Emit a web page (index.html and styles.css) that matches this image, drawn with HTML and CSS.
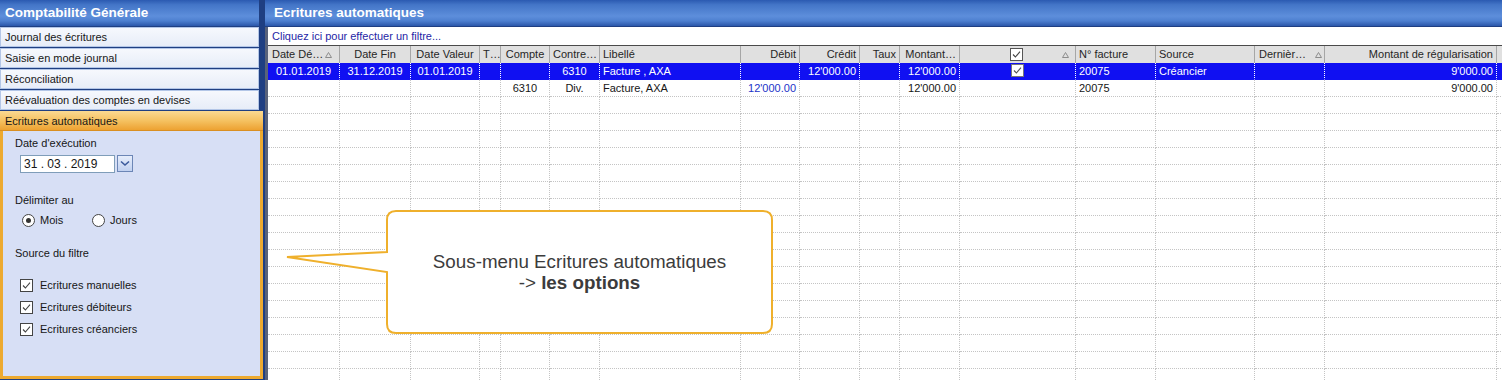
FILE: index.html
```html
<!DOCTYPE html>
<html lang="fr">
<head>
  <meta charset="UTF-8" />
  <meta name="viewport" content="width=device-width, initial-scale=1.0"/>
  <title>Comptabilité Générale - Ecritures automatiques</title>
  <link rel="stylesheet" href="styles.css">
</head>
<body>
  <div class="app">
    <aside class="sidebar">
      <div class="title-bar side-title">Comptabilité Générale</div>
      <ul class="menu">
        <li>Journal des écritures</li>
        <li>Saisie en mode journal</li>
        <li>Réconciliation</li>
        <li>Réévaluation des comptes en devises</li>
      </ul>

      <section class="options">
        <div class="options-head">Ecritures automatiques</div>
        <div class="options-body">
          <div class="field-label">Date d'exécution</div>
          <div class="date-row">
            <div class="date-input">31 . 03 . 2019</div>
            <div class="date-btn">
              <svg width="10" height="7" viewBox="0 0 10 7"><path d="M1 1.5 L5 5 L9 1.5" fill="none" stroke="#3b5a9c" stroke-width="1.6"/></svg>
            </div>
          </div>

          <div class="field-label gap-delim">Délimiter au</div>
          <div class="radio-row">
            <label class="radio-opt"><span class="radio on"></span>Mois</label>
            <label class="radio-opt"><span class="radio"></span>Jours</label>
          </div>

          <div class="field-label gap-source">Source du filtre</div>
          <ul class="check-list">
            <li><svg class="check" width="13" height="13" viewBox="0 0 13 13"><rect x="0.5" y="0.5" width="12" height="12" fill="#fff" stroke="#444"/><path d="M3 6.5 L5.4 9 L10 3.6" fill="none" stroke="#444" stroke-width="1.1"/></svg>Ecritures manuelles</li>
            <li><svg class="check" width="13" height="13" viewBox="0 0 13 13"><rect x="0.5" y="0.5" width="12" height="12" fill="#fff" stroke="#444"/><path d="M3 6.5 L5.4 9 L10 3.6" fill="none" stroke="#444" stroke-width="1.1"/></svg>Ecritures débiteurs</li>
            <li><svg class="check" width="13" height="13" viewBox="0 0 13 13"><rect x="0.5" y="0.5" width="12" height="12" fill="#fff" stroke="#444"/><path d="M3 6.5 L5.4 9 L10 3.6" fill="none" stroke="#444" stroke-width="1.1"/></svg>Ecritures créanciers</li>
          </ul>
        </div>
      </section>
    </aside>

    <main class="main">
      <div class="title-bar main-title">Ecritures automatiques</div>
      <div class="grid-panel">
        <div class="filter">Cliquez ici pour effectuer un filtre...</div>

        <div class="row head">
          <div class="sort">Date Dé…<svg width="7" height="6" viewBox="0 0 7 6"><path d="M3.5 0.5 L6.5 5.5 L0.5 5.5 Z" fill="none" stroke="#8c8c8c"/></svg></div>
          <div class="c">Date Fin</div>
          <div class="c">Date Valeur</div>
          <div>T…</div>
          <div class="c">Compte</div>
          <div>Contre…</div>
          <div>Libellé</div>
          <div class="r">Débit</div>
          <div class="r">Crédit</div>
          <div class="r">Taux</div>
          <div class="r">Montant…</div>
          <div class="check-head">
            <svg width="13" height="13" viewBox="0 0 13 13"><rect x="0.5" y="0.5" width="12" height="12" fill="#fff" stroke="#555"/><path d="M3 6.5 L5.4 9 L10 3.6" fill="none" stroke="#444" stroke-width="1.1"/></svg>
            <svg class="tri" width="7" height="6" viewBox="0 0 7 6"><path d="M3.5 0.5 L6.5 5.5 L0.5 5.5 Z" fill="none" stroke="#8c8c8c"/></svg>
          </div>
          <div>N° facture</div>
          <div>Source</div>
          <div class="sort wide">Dernièr…<svg width="7" height="6" viewBox="0 0 7 6"><path d="M3.5 0.5 L6.5 5.5 L0.5 5.5 Z" fill="none" stroke="#8c8c8c"/></svg></div>
          <div class="r">Montant de régularisation</div>
          <div class="last"></div>
        </div>

        <div id="grid-body">
          <div class="row sel">
            <div class="c">01.01.2019</div>
            <div class="c">31.12.2019</div>
            <div class="c">01.01.2019</div>
            <div></div>
            <div></div>
            <div class="c">6310</div>
            <div>Facture , AXA</div>
            <div></div>
            <div class="r">12'000.00</div>
            <div></div>
            <div class="r">12'000.00</div>
            <div class="c"><svg class="cell-check" width="13" height="13" viewBox="0 0 13 13"><rect x="0.5" y="0.5" width="12" height="12" fill="#fff" stroke="#777"/><path d="M3 6.5 L5.4 9 L10 3.6" fill="none" stroke="#555" stroke-width="1.1"/></svg></div>
            <div>20075</div>
            <div>Créancier</div>
            <div></div>
            <div class="r">9'000.00</div>
            <div class="last"></div>
          </div>
          <div class="row">
            <div></div>
            <div></div>
            <div></div>
            <div></div>
            <div class="c">6310</div>
            <div class="c">Div.</div>
            <div>Facture, AXA</div>
            <div class="r debit">12'000.00</div>
            <div></div>
            <div></div>
            <div class="r">12'000.00</div>
            <div></div>
            <div>20075</div>
            <div></div>
            <div></div>
            <div class="r">9'000.00</div>
            <div class="last"></div>
          </div>
          <div class="row empty">
            <div></div><div></div><div></div><div></div><div></div><div></div>
            <div></div><div></div><div></div><div></div><div></div><div></div>
            <div></div><div></div><div></div><div></div><div class="last"></div>
          </div>
        </div>
      </div>
    </main>

    <!-- Callout over the grid -->
    <div class="callout">
      <svg class="callout-shape" width="490" height="128" viewBox="0 0 490 128">
        <path d="M111 3 H478 Q487 3 487 12 V116 Q487 125 478 125 H111 Q102 125 102 116 V64 L2 49 L102 44 V12 Q102 3 111 3 Z" fill="#fff" stroke="#efb02c" stroke-width="2"/>
      </svg>
      <div class="callout-text">
        Sous-menu Ecritures automatiques<br>
        -&gt; <strong>les options</strong>
      </div>
    </div>
  </div>

  <script>
    // fill the rest of the grid with empty rows
    const gridBody = document.getElementById('grid-body');
    const emptyRow = gridBody.querySelector('.row.empty');
    for (let i = 0; i < 16; i++) {
      gridBody.appendChild(emptyRow.cloneNode(true));
    }
  </script>
</body>
</html>
```

FILE: styles.css
```css
body {
  margin: 0;
  background: #1f3f82;
  font-family: "Liberation Sans", Arial, sans-serif;
  font-size: 11px;
  color: #161616;
}

.app {
  position: relative;
  display: flex;
  height: 380px;
  overflow: hidden;
}

/* ---- title bars ---- */
.title-bar {
  height: 26px;
  line-height: 26px;
  color: #fff;
  font-size: 13.5px;
  font-weight: bold;
  white-space: nowrap;
  background: linear-gradient(to bottom, #2b5ab1 0%, #4375c7 18%, #5d8edb 62%, #4e80d0 80%, #2b57aa 100%);
}

.side-title {
  width: 259px;
  padding-left: 5px;
  box-sizing: border-box;
}

.main-title {
  padding-left: 9px;
}

/* ---- sidebar ---- */
.sidebar {
  width: 262px;
  flex-shrink: 0;
  display: flex;
  flex-direction: column;
}

.menu {
  list-style: none;
  margin: 1px 0 0;
  padding: 0;
}

.menu li {
  box-sizing: border-box;
  width: 259px;
  height: 20px;
  line-height: 18px;
  margin-bottom: 1px;
  padding-left: 4px;
  border: 1px solid #b3c6e7;
  background: linear-gradient(to bottom, #f6f8fd, #e7edf8);
}

.options {
  flex: 1;
  width: 263px;
  box-sizing: border-box;
  margin-bottom: 1px;
  border: 3px solid #edaa30;
  border-top: 0;
  background: #d7dff5;
}

.options-head {
  height: 20px;
  line-height: 20px;
  margin: 0 -3px;
  padding-left: 5px;
  background: linear-gradient(to bottom, #fad992 0%, #f5c262 50%, #eda232 100%);
  border-bottom: 1px solid #d98f22;
  box-sizing: border-box;
}

.options-body {
  padding: 5px 0 0 12px;
}

.field-label {
  line-height: 14px;
}

.gap-delim {
  margin-top: 20px;
}

.gap-source {
  margin-top: 19px;
}

.date-row {
  display: flex;
  gap: 2px;
  margin: 5px 0 0 5px;
}

.date-input {
  width: 95px;
  height: 18px;
  box-sizing: border-box;
  padding-left: 3px;
  line-height: 16px;
  font-size: 12px;
  border: 1px solid #7f9db9;
  background: #fff;
}

.date-btn {
  width: 16px;
  height: 17px;
  box-sizing: border-box;
  display: flex;
  align-items: center;
  justify-content: center;
  border: 1px solid #6c86b6;
  background: linear-gradient(to bottom, #e6edfb, #c1d1f0);
}

.radio-row {
  display: flex;
  align-items: center;
  height: 14px;
  margin-top: 6px;
  padding-left: 7px;
}

.radio-opt {
  display: flex;
  align-items: center;
  gap: 5px;
  width: 70px;
}

.radio {
  position: relative;
  width: 13px;
  height: 13px;
  box-sizing: border-box;
  border: 1px solid #444;
  border-radius: 50%;
  background: #fff;
}

.radio.on::after {
  content: "";
  position: absolute;
  left: 3px;
  top: 3px;
  width: 5px;
  height: 5px;
  border-radius: 50%;
  background: #333;
}

.check-list {
  list-style: none;
  margin: 14px 0 0;
  padding: 0 0 0 5px;
}

.check-list li {
  display: flex;
  align-items: center;
  gap: 7px;
  height: 22px;
}

/* ---- main grid ---- */
.main {
  flex: 1;
  min-width: 0;
  margin-left: 3px;
  display: flex;
  flex-direction: column;
}

.grid-panel {
  flex: 1;
  margin-top: 1px;
  border-left: 3px solid #58627a;
  background: #fff;
  overflow: hidden;
}

.filter {
  height: 18px;
  line-height: 18px;
  padding-left: 4px;
  color: #1f1fa6;
  border-bottom: 1px solid #4a4a4a;
}

.row {
  display: grid;
  grid-template-columns: 72px 71px 69px 21px 49px 50px 141px 59px 60px 40px 60px 116px 80px 99px 70px 172px 1fr;
  height: 17px;
}

.row > div {
  box-sizing: border-box;
  padding: 0 3px;
  line-height: 16px;
  white-space: nowrap;
  overflow: hidden;
  border-right: 1px dotted #c4c4c4;
  border-bottom: 1px dotted #c4c4c4;
}

.row > .last {
  border-right: 0;
}

.row.head > div {
  line-height: 17px;
  color: #262626;
  background: #e0e0e0;
  border-bottom: 0;
  border-right: 1px solid #a6a6a6;
}

.row.head > .last {
  border-right: 0;
}

.row.head .sort {
  display: flex;
  align-items: center;
  gap: 2px;
  padding-left: 4px;
}

.row.head .sort.wide {
  gap: 9px;
}

.row.head .sort svg {
  flex-shrink: 0;
}

.row.head .check-head {
  display: flex;
  align-items: center;
  padding-left: 50px;
}

.check-head .tri {
  margin-left: 39px;
}

.row.sel > div {
  color: #fff;
  background: #1010f2;
  border-right-color: #fff;
  border-bottom: 1px solid #1010f2;
}

.cell-check {
  vertical-align: -2px;
}

.c {
  text-align: center;
}

.r {
  text-align: right;
}

.debit {
  color: #2233c8;
}

/* ---- callout ---- */
.callout {
  position: absolute;
  left: 285px;
  top: 208px;
  width: 490px;
  height: 128px;
}

.callout-shape {
  display: block;
}

.callout-text {
  position: absolute;
  left: 102px;
  top: 43px;
  width: 385px;
  text-align: center;
  font-size: 18.8px;
  line-height: 21px;
  color: #3c3c3c;
}
```
